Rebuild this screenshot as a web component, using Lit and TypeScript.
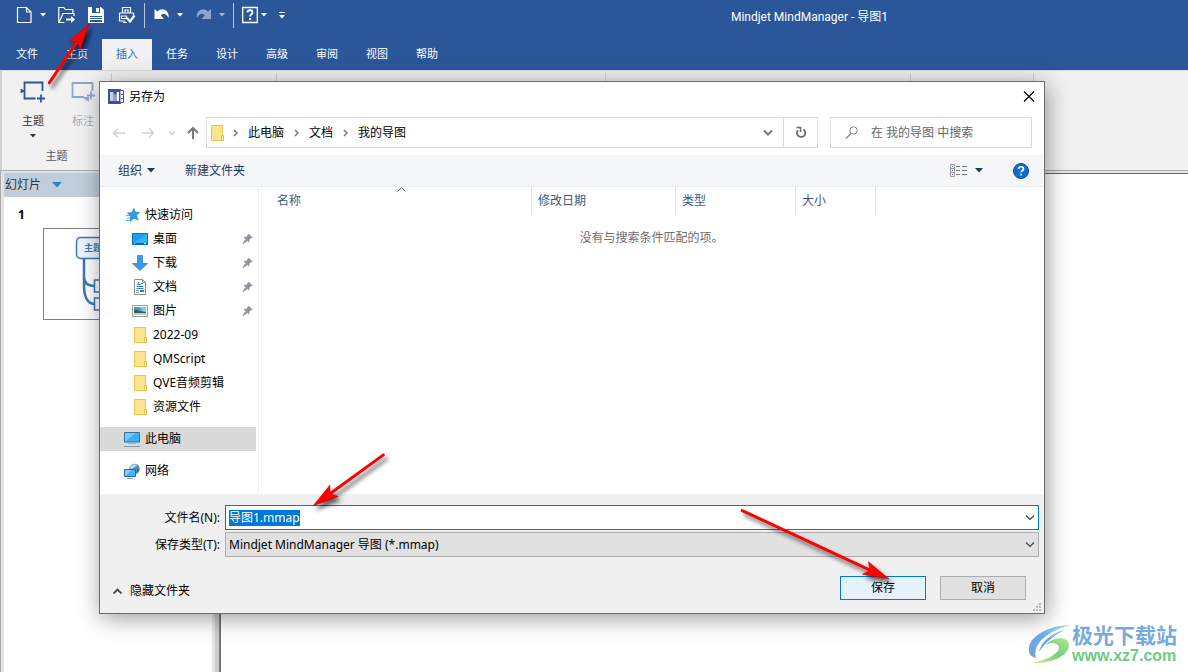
import { LitElement, html, css, svg } from "lit";
import { customElement, property, query, state } from "lit/decorators.js";
import { classMap } from "lit/directives/class-map.js";

const glyphs: Record<string, unknown> = {
  newDoc: svg`<path d="M1.500 1.500h9l4.500 4.500v10.500H1.500z M10.500 1.500V6H15" fill="none" stroke="#fff" stroke-width="1.200"/>`,
  open: svg`<path d="M6.500 16.500H.8v-15h5l1.500 2h7.500v3.500M1 16.500l4-9h11v2.500" fill="none" stroke="#fff" stroke-width="1.200"/><path d="M8 12.500h5V10l4 3.500-4 3.500v-2.500H8z" fill="#fff"/>`,
  save: svg`<path d="M0 1h13l3 3v13H0z" fill="#fff"/><path d="M4 1h8v6H4zM2 10h12v6H2z" fill="#2b579a"/><path d="M8 2h3v4H8zM2 11h12v1H2zM2 13h12v1H2z" fill="#fff"/>`,
  print: svg`<path d="M4.500 7V1.500h8V7M1.500 7v8h6M15.500 10V7M1.500 7h14M7 7V4h3v3M3.500 10h5v2.500h-5zM5 16.500h4" fill="none" stroke="#fff" stroke-width="1.200"/><path d="M9 12l3 3.500 4.500-6" fill="none" stroke="#fff" stroke-width="2.200"/>`,
  undo: svg`<path d="M1.500 3v10h9.500L7.800 9.500C9.500 7 13 7 15.500 12c1.500-7.500-6-11.500-11-6.500z" fill="#fff"/>`,
  redo: svg`<path d="M16 3v10H6.500l3.200-3.500C8 7 4.500 7 2 12 .5 4.500 8 .5 13 5.500z" fill="#8ba6cf"/>`,
  help: svg`<path d="M.700 1.500h14.600v15H.7z" fill="none" stroke="#fff" stroke-width="1.300"/><path d="M5.500 6.500c0-3 5-3 5 0 0 1.800-2.400 1.800-2.400 4" fill="none" stroke="#fff" stroke-width="1.900"/><path d="M7.100 12h2v2h-2z" fill="#fff"/>`,
};

const icons: Record<string, unknown> = {
  quick: svg`<path d="M9.800 1.500l1.600 4 4.200-.3-3.200 3.200 1.700 4.600-4-2L6 14.500l.6-5L3.800 6l4.200-.2z" fill="#2f9be8" stroke="#1b7cc6" stroke-width=".7"/><path d="M2 8.500h4M3 11h3M3 6h2M2 13.500h3" stroke="#5db4ef"/>`,
  desktop: svg`<path d="M.5 2.500h15v11H.5z" fill="#18a0fb" stroke="#0a70c0"/><path d="M1 12L15 3v9z" fill="#36b0ff"/><path d="M1 12.500h14" stroke="#0b5fa5"/><path d="M2 12.500h1M12 12.500h2" stroke="#d8efff"/>`,
  down: svg`<path d="M5.500.5h5v8h5L8 15.500.5 8.500h5z" fill="#3b9ae8" stroke="#2277c4" stroke-width=".7"/>`,
  doc: svg`<path d="M2.500.5h8l3 3v12h-11z" fill="#fff" stroke="#8a8a8a"/><path d="M10.500.5v3h3" fill="none" stroke="#8a8a8a"/><path d="M7 3L5 6.500M5.500 5.500h3M9 4.500h2M4.500 7.500h7M4.500 9.500h7" stroke="#2389cf"/><path d="M4 11.500h3M4 13.500h3" stroke="#999"/><path d="M8 11h4v2H8z" fill="#3c7f9f"/>`,
  pic: svg`<path d="M.5 2.500h15v11H.5z" fill="#fff" stroke="#9a9a9a"/><path d="M2 4h12v8H2z" fill="#8fc3f2"/><path d="M2 4h5l4 3H2z" fill="#4f93dc"/><path d="M2 7c4-1 7 2 12 2v1.500H2z" fill="#2e6650"/><path d="M2 10h12v2H2z" fill="#b4cfe0"/>`,
  folder: svg`<path d="M2.500.5h11v15h-11z" fill="#ffe48f" stroke="#e9c34b"/><path d="M12.500 10.500h2v5h-2z" fill="#ffeaa5" stroke="#e2b93a" stroke-width=".8"/>`,
  pc: svg`<path d="M.5 1.500h15v9.500H.5z" fill="#38b0fb" stroke="#35719c"/><path d="M1 10.500L12 2H1z" fill="#75cbff"/><path d="M4 12.500h8" stroke="#9fb6c8"/><path d="M0 15.500h16" stroke="#7f9bb2"/>`,
  net: svg`<circle cx="10.500" cy="6" r="5.300" fill="#4f91b5"/><path d="M6 4c3-4 6-3 7-1-3 0-3 3-6 3z" fill="#b9dfe9"/><path d="M13 5c2 1 2 3 0 5z" fill="#2b6186"/><path d="M.5 6.500h11v7H.5z" fill="#45b4f8" stroke="#24699a"/><path d="M1 13l7-6H1z" fill="#85d1fb"/><path d="M3 15.500h6" stroke="#7f9bb2"/>`,
  app: svg`<path d="M0 0h13v15H0z" fill="#3b50a5"/><path d="M12.500 1.500h3v12h-3M13 5.500h2.500M13 9.500h2.500" fill="#fff" stroke="#3b50a5"/><path d="M2 3h3v9H2z" fill="#c9cde0"/><path d="M5 3l2 3 2-3v9H5z" fill="#9aa1c0"/><path d="M9 3h2v9H9z" fill="#fff"/>`,
};

const icon = (name: string) => html`<svg class="ico" width="16" height="16" viewBox="0 0 16 16" aria-hidden="true">${icons[name]}</svg>`;

const base = css`
  * { box-sizing: border-box; }
  button, input, select { font: inherit; color: inherit; border: 0; margin: 0; padding: 0; background: none; border-radius: 0; outline: 0; }
  svg { display: block; flex: none; }
`;

@customElement("title-strip")
class TitleStrip extends LitElement {
  static styles = [base, css`
    :host { display: block; background: #2b579a; color: #fff; font-size: 11px; line-height: 16px; }
    .quick { display: flex; align-items: center; gap: 12px; height: 30px; padding-left: 16px; }
    .split { display: flex; align-items: center; gap: 6px; }
    .tight { gap: 3px; }
    .dim { opacity: .6; }
    .sep { width: 1px; height: 25px; margin: 0 -4px; background: #b8c6dd; }
    .title { margin: 4px 300px 0 auto; font-family: Roboto, "Noto Sans CJK SC", sans-serif; font-size: 12px; white-space: nowrap; }
    .tabs { display: flex; padding: 9px 0 0 2px; }
    .tab { width: 50px; height: 31px; padding-bottom: 2px; }
    .tab.on { background: #f1f1f1; color: #1e6fc8; }
  `];
  @state() active = "插入";
  private tabs = ["文件", "主页", "插入", "任务", "设计", "高级", "审阅", "视图", "帮助"];

  private tool(name: string, label: string, w = 18) {
    return html`<button aria-label=${label}><svg width=${w} height="18" viewBox="0 0 ${w} 18">${glyphs[name]}</svg></button>`;
  }
  private caret(label: string, dim = false) {
    return html`<button class=${classMap({ dim })} aria-label=${label}><svg width="6" height="4" viewBox="0 0 6 4"><path d="M0 0h6L3 3.500z" fill="#fff"/></svg></button>`;
  }
  render() {
    return html`
      <div class="quick">
        <div class="split">${this.tool("newDoc", "新建")}${this.caret("新建选项")}</div>
        ${this.tool("open", "打开")}${this.tool("save", "保存")}${this.tool("print", "打印")}
        <span class="sep"></span>
        <div class="split">${this.tool("undo", "撤消")}${this.caret("撤消选项")}</div>
        <div class="split">${this.tool("redo", "恢复")}${this.caret("恢复选项", true)}</div>
        <span class="sep"></span>
        <div class="split tight">${this.tool("help", "帮助", 16)}${this.caret("帮助选项")}</div>
        <button aria-label="自定义"><svg width="6" height="8" viewBox="0 0 6 8"><path d="M0 1.500h6" stroke="#fff"/><path d="M0 4h6L3 7.500z" fill="#fff"/></svg></button>
        <span class="title">Mindjet MindManager - 导图1</span>
      </div>
      <nav class="tabs">
        ${this.tabs.map(t => html`<button class=${classMap({ tab: true, on: t === this.active })} @click=${() => (this.active = t)}>${t}</button>`)}
      </nav>`;
  }
}

@customElement("ribbon-bar")
class RibbonBar extends LitElement {
  static styles = [base, css`
    :host { display: flex; height: 100px; background: #f1f1f1; border-top: 1px solid #d8d8d8; border-left: 2px solid #d0d0d0; font-size: 11px; line-height: 16px; color: #333; }
    .group { display: flex; flex-direction: column; border-right: 1px solid #d0d0d0; margin: 2px 0; padding-top: 8px; }
    .g1 { width: 110px; } .g2 { width: 165px; } .g3 { width: 329px; } .g4 { width: 305px; } .g5 { width: 123px; }
    .row { display: flex; padding-left: 6px; }
    .cmd { width: 50px; height: 60px; display: flex; flex-direction: column; align-items: center; }
    .cmd span { margin-top: 10px; }
    .cmd .drop { margin-top: 5px; }
    .off { color: #aaa; }
    .name { text-align: center; color: #555; margin-top: 7px; }
  `];
  render() {
    return html`
      <div class="group g1">
        <div class="row">
          <button class="cmd">
            <svg width="26" height="22" viewBox="0 0 26 22"><path d="M15.500 17.500H4.500v-16h18v8.500M1.500 8v4M1.500 10h3M17 17.500h8M21 13.500v8" fill="none" stroke="#2b579a" stroke-width="1.800"/></svg>
            <span>主题</span>
            <svg class="drop" width="6" height="4" viewBox="0 0 6 4"><path d="M0 0h6L3 3.500z" fill="#333"/></svg>
          </button>
          <button class="cmd off">
            <svg width="26" height="22" viewBox="0 0 26 22"><path d="M14 16H2.500V2h20v8M17 14.500h8M21 10.500v8" fill="none" stroke="#8fa6cb" stroke-width="1.800"/><path d="M12 16h7v5z" fill="#8fa6cb"/></svg>
            <span>标注</span>
          </button>
        </div>
        <div class="name">主题</div>
      </div>
      <div class="group g2"></div><div class="group g3"></div><div class="group g4"></div><div class="group g5"></div>`;
  }
}

@customElement("slide-panel")
class SlidePanel extends LitElement {
  static styles = [base, css`
    :host { display: block; width: 221px; flex: none; background: #fff; border-left: 1px solid #aaa; border-top: 1px solid #aaa; border-right: 2px solid #777; font-size: 12px; line-height: 16px; }
    .inner { height: 100%; border: solid #e3e3e3; border-width: 2px 0 0 3px; }
    .edge { height: 100%; border-right: 4px solid #ccc; }
    .track { height: 100%; border-right: 3px solid #e6e6e6; }
    .head { display: flex; align-items: center; gap: 11px; height: 24px; background: #c0cddb; color: #333; padding-left: 1px; }
    .slide { display: flex; flex-direction: column; padding: 10px 0 0 14px; }
    .num { font-weight: 700; color: #000; }
    .thumb { width: 124px; height: 92px; margin: 5px 0 0 25px; border: 1px solid #808080; }
  `];
  render() {
    return html`<div class="inner"><div class="edge"><div class="track">
      <div class="head"><span>幻灯片</span><svg width="10" height="6" viewBox="0 0 10 6"><path d="M0 0h10L5 5.500z" fill="#2b84bd"/></svg></div>
      <div class="slide"><span class="num">1</span>
        <div class="thumb"><svg width="122" height="90" viewBox="0 0 122 90">
          <g fill="none" stroke="#3a78b5" stroke-width="1.500"><path d="M40 30v26q0 19 11 19M40 30v18q0 9 11 9" stroke-width="2.500"/><rect x="32.500" y="8.500" width="60" height="21" rx="4" fill="#eef4fb"/><rect x="50.500" y="51" width="30" height="12"/><rect x="50.500" y="69" width="30" height="12"/></g>
          <text x="40" y="22" font-size="9" font-weight="700" fill="#3a78b5">主题</text></svg></div>
      </div></div></div></div>`;
  }
}

@customElement("save-dialog")
class SaveDialog extends LitElement {
  static styles = [base, css`
    :host { display: block; background: #fff; border: 1px solid #6b6e70; box-shadow: 2px 4px 22px rgba(0,0,0,.4); font-size: 12px; line-height: 16px; color: #000; }
    .bar { display: flex; align-items: center; height: 30px; padding: 0 9px 0 8px; gap: 5px; }
    .close { margin-left: auto; }
    .nav { display: flex; align-items: center; padding: 5px 12px 7px 12px; color: #000; }
    .arrows { display: flex; align-items: center; gap: 15px; width: 94px; }
    .arrows .mid { margin: 0 -4px 0 -1px; }
    .path { flex: 1; display: flex; align-items: center; gap: 10px; height: 31px; border: 1px solid #d9d9d9; padding-left: 2px; }
    .path a { color: inherit; text-decoration: none; }
    .path .ico { margin-right: -2px; }
    .path .more { margin-left: auto; width: 10px; }
    .fresh { width: 34px; height: 29px; border-left: 1px solid #d9d9d9; display: grid; place-items: center; }
    .find { display: flex; align-items: center; width: 202px; height: 31px; margin-left: 12px; border: 1px solid #d9d9d9; padding-left: 14px; gap: 12px; }
    .find input { flex: 1; min-width: 0; }
    .find input::placeholder { color: #666; opacity: 1; }
    .tools { display: flex; align-items: center; height: 32px; padding: 0 15px 0 18px; gap: 30px; background: #f5f6f7; border-bottom: 1px solid #e8eaec; color: #1e395b; }
    .tools button { display: flex; align-items: center; gap: 5px; }
    .tools .view { margin-left: auto; gap: 8px; }
    .main { display: flex; height: 307px; }
    .side { width: 159px; flex: none; border-right: 1px solid #f0f0f0; padding: 16px 2px 0 0; }
    .item { display: flex; align-items: center; gap: 5px; width: 100%; height: 24px; padding: 0 3px 0 24px; white-space: nowrap; }
    .sub { padding-left: 32px; }
    .item .pin { margin-left: auto; }
    .apart { margin-top: 8px; }
    .picked { background: #d9d9d9; }
    .list { flex: 1; min-width: 0; }
    table { width: 100%; border-collapse: separate; border-spacing: 0; table-layout: fixed; }
    th { height: 28px; padding: 0 0 0 6px; font-weight: 400; text-align: left; color: #44597a; border-right: 1px solid #e5e5e5; position: relative; }
    th:first-child { padding-left: 18px; }
    th:last-child { border: 0; }
    .c1 { width: 273px; } .c2 { width: 144px; } .c3 { width: 120px; } .c4 { width: 80px; }
    .sort { position: absolute; left: 138px; top: 0; }
    td { height: 46px; text-align: center; color: #6d6d6d; }
    .foot { background: #f0f0f0; padding: 11px 5px 13px 0; position: relative; }
    .form { display: grid; grid-template-columns: 120px 1fr; gap: 2px 5px; align-items: center; }
    label { text-align: right; white-space: nowrap; }
    .field { display: flex; align-items: center; height: 25px; border: 1px solid #0078d7; background: #fff; padding: 0 3px; position: relative; }
    .field input { flex: 1; }
    .field input::selection { background: #0078d7; color: #fff; }
    .type { border-color: #adadad; background: #e1e1e1; padding: 0; }
    select { appearance: none; width: 100%; height: 23px; padding-left: 3px; }
    .type svg { position: absolute; right: 3px; pointer-events: none; }
    .acts { display: flex; gap: 14px; align-items: center; padding: 19px 13px 0 13px; }
    .hide { display: flex; align-items: center; gap: 8px; margin: 5px auto 0 0; }
    .act { width: 86px; height: 24px; border: 1px solid #adadad; background: #e1e1e1; }
    .main-act { border-color: #0078d7; background: #e5f1fb; }
    .grip { position: absolute; right: 3px; bottom: 2px; }
  `];
  @property() name = "导图1.mmap";
  @query("#fname") private field!: HTMLInputElement;
  firstUpdated() {
    this.field.focus();
    this.field.select();
  }
  private places = [
    { i: "quick", t: "快速访问" },
    { i: "desktop", t: "桌面", sub: true, pin: true },
    { i: "down", t: "下载", sub: true, pin: true },
    { i: "doc", t: "文档", sub: true, pin: true },
    { i: "pic", t: "图片", sub: true, pin: true },
    { i: "folder", t: "2022-09", sub: true },
    { i: "folder", t: "QMScript", sub: true },
    { i: "folder", t: "QVE音频剪辑", sub: true },
    { i: "folder", t: "资源文件", sub: true },
    { i: "pc", t: "此电脑", apart: true, picked: true },
    { i: "net", t: "网络", apart: true },
  ] as { i: string; t: string; sub?: boolean; pin?: boolean; apart?: boolean; picked?: boolean }[];

  private chevron = html`<svg width="5" height="8" viewBox="0 0 5 8"><path d="M1 1l3 3-3 3" fill="none" stroke="#777" stroke-width="1.500"/></svg>`;
  private down = (c: string, w = 1.2) => html`<svg width="10" height="6" viewBox="0 0 10 6"><path d="M1 .5l4 4 4-4" fill="none" stroke=${c} stroke-width=${w}/></svg>`;
  private tri = html`<svg width="8" height="5" viewBox="0 0 8 5"><path d="M0 0h8L4 4.500z" fill="#1e395b"/></svg>`;
  private arrow = (d: string, c: string, w: number) => html`<svg width="14" height="14" viewBox="0 0 14 14"><path d=${d} fill="none" stroke=${c} stroke-width=${w}/></svg>`;

  render() {
    return html`
      <div class="bar">${icon("app")}<span>另存为</span>
        <button class="close" aria-label="关闭"><svg width="12" height="12" viewBox="0 0 12 12"><path d="M1 .5l10 10M11 .5l-10 10" stroke="#000" stroke-width="1.200"/></svg></button>
      </div>
      <div class="nav">
        <div class="arrows">
          <button aria-label="后退">${this.arrow("M13 7H1.500M6 2.500L1.500 7 6 11.500", "#d0d0d0", 1.5)}</button>
          <button aria-label="前进">${this.arrow("M1 7h11.500M8 2.500L12.500 7 8 11.500", "#d0d0d0", 1.5)}</button>
          <button class="mid" aria-label="最近位置"><svg width="6" height="4" viewBox="0 0 6 4"><path d="M0 .5l3 3 3-3" fill="none" stroke="#d0d0d0" stroke-width="1.500"/></svg></button>
          <button aria-label="上移">${this.arrow("M7 13V2M2 7l5-5 5 5", "#777", 2)}</button>
        </div>
        <div class="path">${icon("folder")}${this.chevron}<a href="#">此电脑</a>${this.chevron}<a href="#">文档</a>${this.chevron}<a href="#">我的导图</a>
          <button class="more" aria-label="以前的位置">${this.down("#777", 2)}</button>
          <button class="fresh" aria-label="刷新"><svg width="12" height="13" viewBox="0 0 12 13"><path d="M2.800 4.200a4.200 4.200 0 1 0 5.700-.9" fill="none" stroke="#6b6b6b" stroke-width="1.800"/><path d="M1.500 1.500h4v4.500" fill="none" stroke="#6b6b6b" stroke-width="1.500"/></svg></button>
        </div>
        <div class="find"><svg width="14" height="13" viewBox="0 0 14 13"><circle cx="8.500" cy="4.500" r="3.700" fill="none" stroke="#888"/><path d="M6 7.500l-5 5" stroke="#888" stroke-width="1.200"/></svg>
          <input type="search" aria-label="搜索" placeholder="在 我的导图 中搜索"></div>
      </div>
      <div class="tools">
        <button>组织 ${this.tri}</button><button>新建文件夹</button>
        <button class="view" aria-label="更改视图"><svg width="17" height="13" viewBox="0 0 17 13"><path d="M.5.500h4v12h-4zM.5 4.500h4M.5 8.500h4" fill="none" stroke="#999"/><path d="M6 2.500h4M12 2.500h5M6 6.500h4M12 6.500h5M6 10.500h4M12 10.500h5" stroke="#777"/><path d="M2 10h1v1H2z" fill="#d22"/><path d="M2 2h1v1H2zM2 6h1v1H2z" fill="#27c"/></svg>${this.tri}</button>
        <button aria-label="帮助"><svg width="16" height="16" viewBox="0 0 16 16"><circle cx="8" cy="8" r="7.500" fill="#0f6fd0" stroke="#0a4a91"/><path d="M5.700 6c0-3 4.800-3 4.800 0 0 1.500-2.400 1.600-2.400 3.300M8.100 10.700v1.900" fill="none" stroke="#fff" stroke-width="1.700"/></svg></button>
      </div>
      <div class="main">
        <nav class="side">${this.places.map(p => html`
          <button class=${classMap({ item: true, sub: !!p.sub, apart: !!p.apart, picked: !!p.picked })}>${icon(p.i)}<span>${p.t}</span>
            ${p.pin ? html`<svg class="pin" width="11" height="12" viewBox="0 0 11 12"><path d="M6.500 1L10 4.500 8.500 5 7 6.800 6.800 9 2 4.500l2.200-.3L6 2.500zM1 10.500l2.500-4 1.500 1.500z" fill="#8a949e" stroke="#8a949e" stroke-width=".8"/></svg>` : ""}
          </button>`)}</nav>
        <div class="list"><table>
          <thead><tr>
            <th class="c1">名称<svg class="sort" width="9" height="5" viewBox="0 0 9 5"><path d="M.5 4.500l4-4 4 4" fill="none" stroke="#666"/></svg></th>
            <th class="c2">修改日期</th><th class="c3">类型</th><th class="c4">大小</th><th></th></tr></thead>
          <tbody><tr><td colspan="5">没有与搜索条件匹配的项。</td></tr></tbody>
        </table></div>
      </div>
      <div class="foot">
        <div class="form">
          <label for="fname">文件名(N):</label>
          <div class="field"><input id="fname" .value=${this.name}>${this.down("#444")}</div>
          <label for="ftype">保存类型(T):</label>
          <div class="field type"><select id="ftype"><option>Mindjet MindManager 导图 (*.mmap)</option></select>${this.down("#444")}</div>
        </div>
        <div class="acts">
          <button class="hide"><svg width="9" height="6" viewBox="0 0 9 6"><path d="M.5 5.500l4-4 4 4" fill="none" stroke="#444" stroke-width="1.800"/></svg>隐藏文件夹</button>
          <button class="act main-act">保存</button><button class="act">取消</button>
        </div>
        <svg class="grip" width="8" height="8" viewBox="0 0 8 8"><path d="M6 0h2v2H6zM3 3h2v2H3zM6 3h2v2H6zM0 6h2v2H0zM3 6h2v2H3zM6 6h2v2H6z" fill="#b8b8b8"/></svg>
      </div>`;
  }
}

@customElement("app-root")
class AppRoot extends LitElement {
  static styles = [base, css`
    :host { display: flex; flex-direction: column; position: relative; height: 100vh; overflow: hidden; background: #f1f1f1; font-family: "Noto Sans", "Noto Sans CJK SC", sans-serif; }
    .work { flex: 1; display: flex; min-height: 0; background: #f1f1f1; }
    .canvas { flex: 1; background: #e6e6e6; border-top: 1px solid #aaa; }
    .page { height: 100%; margin-top: 2px; border-top: 1px solid #666; background: #fff; }
    save-dialog { position: absolute; left: 99px; right: 143px; top: 81px; }
    .marks { position: absolute; left: 0; top: 0; pointer-events: none; filter: drop-shadow(3px 4px 2px rgba(0,0,0,.6)); }
    .brand { position: absolute; right: 11px; bottom: 7px; display: flex; align-items: center; }
    .words { display: flex; flex-direction: column; color: #78aade; font-size: 21px; line-height: 24px; font-weight: 700; }
    .url { font-family: "Liberation Sans", sans-serif; font-size: 16px; line-height: 18px; color: #6dcb85; }
  `];
  private marks = [
    { x: 89, y: 24, r: -56, len: 71 },
    { x: 313, y: 506, r: 144, len: 87 },
    { x: 889, y: 579, r: 25, len: 162 },
  ];
  render() {
    return html`
      <title-strip></title-strip>
      <ribbon-bar></ribbon-bar>
      <div class="work"><slide-panel></slide-panel><div class="canvas"><div class="page"></div></div></div>
      <save-dialog></save-dialog>
      <svg class="marks" width="1188" height="672" viewBox="0 0 1188 672" aria-hidden="true">
        ${this.marks.map(m => svg`<g transform="translate(${m.x} ${m.y}) rotate(${m.r})"><path d="M${-m.len} 0H-18" stroke="#f00" stroke-width="3" stroke-linecap="round"/><path d="M0 0L-26 -7L-21 0L-26 7z" fill="#f00" stroke="#b00" stroke-width=".5"/></g>`)}
      </svg>
      <div class="brand">
        <svg width="44" height="42" viewBox="0 0 44 42"><defs><linearGradient id="b" x1="1" y1="0" x2="0" y2="1"><stop offset="0" stop-color="#9fe8c8"/><stop offset=".5" stop-color="#6aaae4"/><stop offset="1" stop-color="#7a9fe0"/></linearGradient><linearGradient id="g" x1="0" y1="1" x2="1" y2="0"><stop offset="0" stop-color="#f5e08a"/><stop offset=".5" stop-color="#6fd084"/><stop offset="1" stop-color="#b4e68a"/></linearGradient></defs>
          <path d="M43 2C20 2 0 14 1 27c0 5 3 7 7 8C4 22 18 8 43 2z" fill="url(#b)"/><path d="M38 6C24 10 13 18 11 29c6-9 14-16 27-23z" fill="url(#b)"/><path d="M17 22c9-9 24-9 24 0 0 10-16 19-37 18 15-3 26-9 27-15 0-5-8-6-14-3z" fill="url(#g)"/></svg>
        <div class="words"><span>极光下载站</span><span class="url">www.xz7.com</span></div>
      </div>`;
  }
}
